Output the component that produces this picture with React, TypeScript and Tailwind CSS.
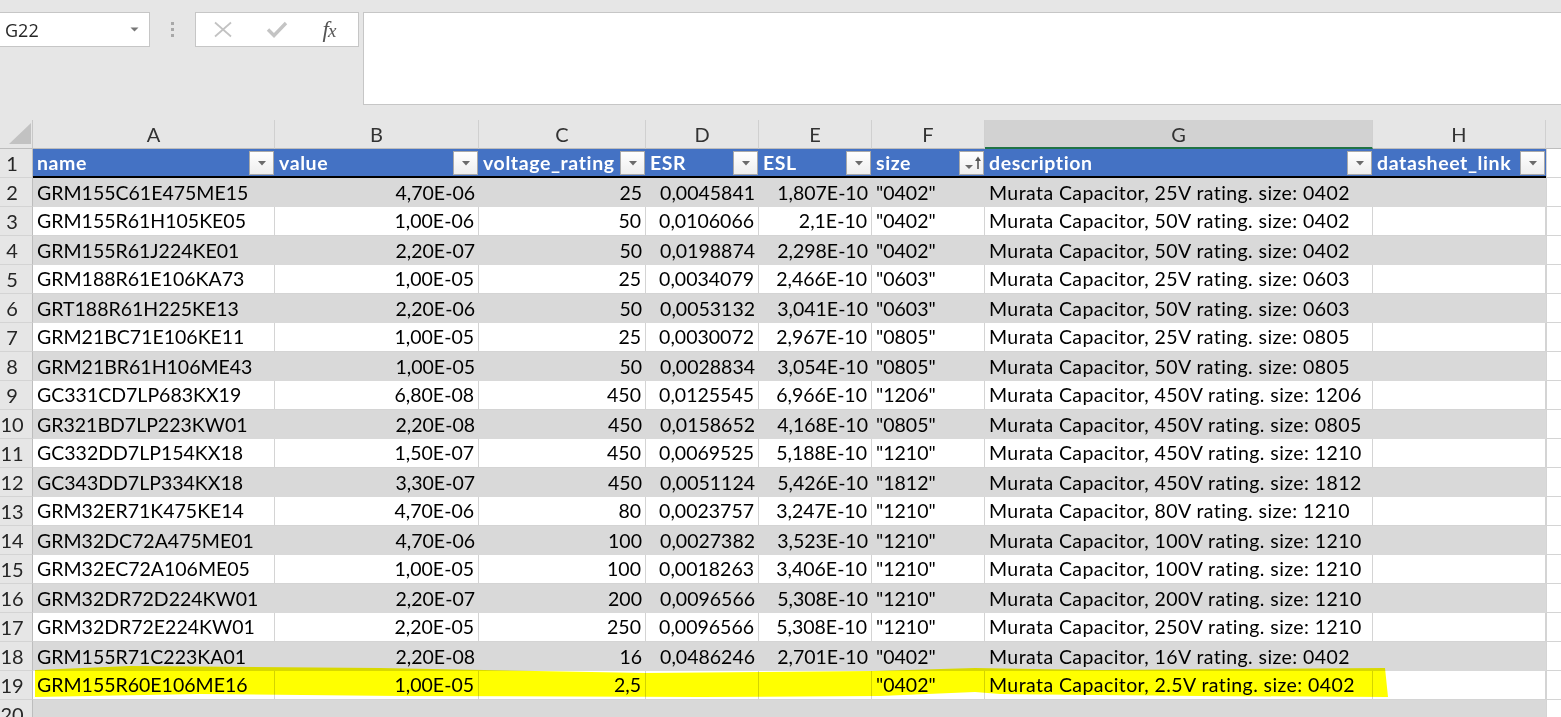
import React from "react";

const colW = ["w-[242px]", "w-[204px]", "w-[167px]", "w-[113px]", "w-[113px]", "w-[113px]", "w-[388px]", "w-[173px]"];
const letters = ["A", "B", "C", "D", "E", "F", "G", "H"];
const headers = ["name", "value", "voltage_rating", "ESR", "ESL", "size", "description", "datasheet_link"];
const right = [false, true, true, true, true, false, false, false];

const rows: string[][] = [
  ["GRM155C61E475ME15", "4,70E-06", "25", "0,0045841", "1,807E-10", "\"0402\"", "Murata Capacitor, 25V rating. size: 0402"],
  ["GRM155R61H105KE05", "1,00E-06", "50", "0,0106066", "2,1E-10", "\"0402\"", "Murata Capacitor, 50V rating. size: 0402"],
  ["GRM155R61J224KE01", "2,20E-07", "50", "0,0198874", "2,298E-10", "\"0402\"", "Murata Capacitor, 50V rating. size: 0402"],
  ["GRM188R61E106KA73", "1,00E-05", "25", "0,0034079", "2,466E-10", "\"0603\"", "Murata Capacitor, 25V rating. size: 0603"],
  ["GRT188R61H225KE13", "2,20E-06", "50", "0,0053132", "3,041E-10", "\"0603\"", "Murata Capacitor, 50V rating. size: 0603"],
  ["GRM21BC71E106KE11", "1,00E-05", "25", "0,0030072", "2,967E-10", "\"0805\"", "Murata Capacitor, 25V rating. size: 0805"],
  ["GRM21BR61H106ME43", "1,00E-05", "50", "0,0028834", "3,054E-10", "\"0805\"", "Murata Capacitor, 50V rating. size: 0805"],
  ["GC331CD7LP683KX19", "6,80E-08", "450", "0,0125545", "6,966E-10", "\"1206\"", "Murata Capacitor, 450V rating. size: 1206"],
  ["GR321BD7LP223KW01", "2,20E-08", "450", "0,0158652", "4,168E-10", "\"0805\"", "Murata Capacitor, 450V rating. size: 0805"],
  ["GC332DD7LP154KX18", "1,50E-07", "450", "0,0069525", "5,188E-10", "\"1210\"", "Murata Capacitor, 450V rating. size: 1210"],
  ["GC343DD7LP334KX18", "3,30E-07", "450", "0,0051124", "5,426E-10", "\"1812\"", "Murata Capacitor, 450V rating. size: 1812"],
  ["GRM32ER71K475KE14", "4,70E-06", "80", "0,0023757", "3,247E-10", "\"1210\"", "Murata Capacitor, 80V rating. size: 1210"],
  ["GRM32DC72A475ME01", "4,70E-06", "100", "0,0027382", "3,523E-10", "\"1210\"", "Murata Capacitor, 100V rating. size: 1210"],
  ["GRM32EC72A106ME05", "1,00E-05", "100", "0,0018263", "3,406E-10", "\"1210\"", "Murata Capacitor, 100V rating. size: 1210"],
  ["GRM32DR72D224KW01", "2,20E-07", "200", "0,0096566", "5,308E-10", "\"1210\"", "Murata Capacitor, 200V rating. size: 1210"],
  ["GRM32DR72E224KW01", "2,20E-05", "250", "0,0096566", "5,308E-10", "\"1210\"", "Murata Capacitor, 250V rating. size: 1210"],
  ["GRM155R71C223KA01", "2,20E-08", "16", "0,0486246", "2,701E-10", "\"0402\"", "Murata Capacitor, 16V rating. size: 0402"],
  ["GRM155R60E106ME16", "1,00E-05", "2,5", "", "", "\"0402\"", "Murata Capacitor, 2.5V rating. size: 0402"],
];

function FilterButton({ sorted }: { sorted?: boolean }) {
  return (
    <div className="w-[25px] h-[24px] shrink-0 border border-[#a9a9a9] bg-gradient-to-b from-white to-[#eeeeee] flex items-center justify-center">
      {sorted ? (
        <svg width="20" height="16" viewBox="0 0 20 16">
          <polygon points="3,10 11,10 7,14" fill="#6b6b6b" />
          <line x1="16" y1="3" x2="16" y2="14" stroke="#555" strokeWidth="1.6" />
          <polygon points="13,6 19,6 16,1.5" fill="#555" />
        </svg>
      ) : (
        <svg width="10" height="6" viewBox="0 0 10 6">
          <polygon points="1,1 9,1 5,5.5" fill="#6b6b6b" />
        </svg>
      )}
    </div>
  );
}

function RowHeader({ n }: { n: number }) {
  return (
    <div className="w-[33px] shrink-0 bg-[#e6e6e6] border-r border-[#bdbdbd] border-b border-b-[#d4d4d4] flex items-center justify-center pr-[8px] text-[20px] text-[#262626]">
      {n}
    </div>
  );
}

export default function App() {
  return (
    <div className="relative w-[1561px] h-[717px] overflow-hidden bg-[#e6e6e6] font-['Lato',sans-serif]">
      {/* Formula bar area */}
      <div className="h-[120px] pt-[12px] flex items-start">
        <div className="w-[150px] h-[35px] bg-white border border-l-0 border-[#c6c6c6] flex items-center justify-between pl-[5px] pr-[10px]">
          <span className="font-['Open_Sans',sans-serif] text-[18px] text-[#262626] leading-none">G22</span>
          <svg width="9" height="5" viewBox="0 0 9 5">
            <polygon points="0.5,0.5 8.5,0.5 4.5,4.5" fill="#777" />
          </svg>
        </div>
        <div className="w-[45px] h-[35px] flex flex-col items-center justify-center gap-[3px]">
          <div className="w-[3px] h-[3px] bg-[#a8a8a8]" />
          <div className="w-[3px] h-[3px] bg-[#a8a8a8]" />
          <div className="w-[3px] h-[3px] bg-[#a8a8a8]" />
        </div>
        <div className="w-[164px] h-[35px] bg-white border border-[#c6c6c6] grid grid-cols-3">
          <div className="flex items-center justify-center">
            <svg width="20" height="17" viewBox="0 0 20 17">
              <line x1="2" y1="1.5" x2="18" y2="15.5" stroke="#c2c2c2" strokeWidth="1.7" />
              <line x1="18" y1="1.5" x2="2" y2="15.5" stroke="#c2c2c2" strokeWidth="1.7" />
            </svg>
          </div>
          <div className="flex items-center justify-center">
            <svg width="22" height="17" viewBox="0 0 22 17">
              <polyline points="2,8.5 8,14.5 20,2" fill="none" stroke="#c4c4c4" strokeWidth="3.4" />
            </svg>
          </div>
          <div className="flex items-center justify-center pr-[4px]">
            <span className="font-['Liberation_Serif',serif] italic text-[23px] text-[#555] leading-none tracking-[-1px]">
              f<span className="text-[19px]">x</span>
            </span>
          </div>
        </div>
        <div className="ml-[4px] flex-1 h-[93px] bg-white border border-r-0 border-[#c6c6c6]" />
      </div>

      {/* Column headers */}
      <div className="flex h-[29px]">
        <div className="w-[33px] shrink-0 border-r border-[#c8c8c8] border-b border-b-[#bdbdbd] relative">
          <svg width="33" height="28" viewBox="0 0 33 28" className="absolute left-0 top-0">
            <polygon points="31,3 31,24 9,24" fill="#c2c2c2" />
          </svg>
        </div>
        {letters.map((l, i) => (
          <div
            key={l}
            className={`${colW[i]} shrink-0 flex items-center justify-center text-[20px] text-[#333] border-r border-[#d0d0d0] ${
              l === "G" ? "bg-[#d2d2d2] border-b-2 border-b-[#217346] text-[#1f1f1f]" : "border-b border-b-[#bdbdbd]"
            }`}
          >
            {l}
          </div>
        ))}
        <div className="flex-1 border-b border-b-[#bdbdbd]" />
      </div>

      {/* Grid */}
      <div className="bg-white">
        {/* Header row 1 */}
        <div className="flex h-[29px]">
          <RowHeader n={1} />
          {headers.map((h, i) => (
            <div
              key={h}
              className={`${colW[i]} shrink-0 bg-[#4472c4] border-b-2 border-black flex items-center justify-between pl-[4px] pr-[1px] text-white font-bold text-[19.5px] tracking-[0.6px]`}
            >
              <span className="leading-none">{h}</span>
              <FilterButton sorted={h === "size"} />
            </div>
          ))}
          <div className="flex-1 border-l border-[#d4d4d4] border-b border-b-[#d4d4d4]" />
        </div>

        {rows.map((r, idx) => {
          const n = idx + 2;
          const gray = n % 2 === 0;
          return (
            <div key={n} className="flex h-[29px]">
              <RowHeader n={n} />
              {r.concat([""]).map((v, i) => (
                <div
                  key={i}
                  className={`${colW[i]} shrink-0 flex items-center text-[19.5px] text-black whitespace-nowrap ${
                    right[i] ? "justify-end pr-[4px]" : "justify-start pl-[4px]"
                  } ${i === 6 ? "tracking-[0.42px]" : ""} ${gray ? "bg-[#d9d9d9]" : "bg-white border-r border-b border-[#d4d4d4]"}`}
                >
                  {v}
                </div>
              ))}
              <div className="flex-1 bg-white border-l border-[#d4d4d4] border-b border-b-[#d4d4d4]" />
            </div>
          );
        })}

        {/* Row 20 */}
        <div className="flex h-[29px]">
          <RowHeader n={20} />
          {colW.map((w, i) => (
            <div key={i} className={`${w} shrink-0 bg-[#d9d9d9]`} />
          ))}
          <div className="flex-1 bg-white border-l border-[#d4d4d4]" />
        </div>
      </div>

      {/* Hand-drawn highlighter mark over row 19 */}
      <svg
        className="absolute left-0 top-0 pointer-events-none mix-blend-multiply"
        width="1561"
        height="717"
        viewBox="0 0 1561 717"
      >
        <polygon
          fill="#ffff00"
          points="35,670 130,666 380,668 646,673 760,672 872,671 975,668 1100,670 1385,668 1388,697 1200,696 1000,694 975,692 880,696 700,697 400,696 200,694 35,697"
        />
      </svg>
    </div>
  );
}
